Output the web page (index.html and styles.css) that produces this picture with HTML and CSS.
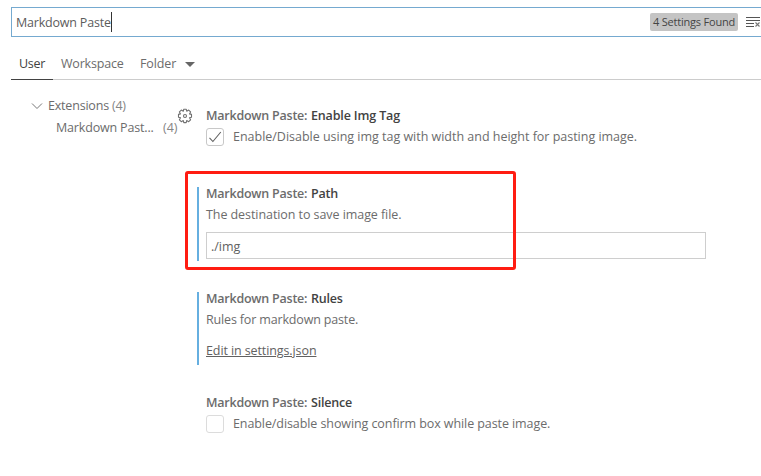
FILE: index.html
```
<!DOCTYPE html>
<html lang="en">
<head>
<meta charset="utf-8">
<title>Settings</title>
<link rel="stylesheet" href="styles.css">
</head>
<body>
<main class="settings">
  <header class="search">
    <div class="query"><span class="query-text">Markdown Paste</span><i class="caret"></i></div>
    <span class="count">4 Settings Found</span>
    <svg class="clear" width="15" height="12" viewBox="0 0 15 12"><path d="M0 1.5h14M0 4.5h14M0 7.5h8M0 10.5h8" stroke="#555" fill="none"/><path d="M9.5 6.5l4 4M13.5 6.5l-4 4" stroke="#777" stroke-width="1.1" fill="none"/></svg>
  </header>
  <nav class="tabs">
    <span class="tab active"><span class="t-user">User</span></span>
    <span class="tab workspace">Workspace</span>
    <span class="tab folder">Folder</span>
    <i class="arrow"></i>
  </nav>
  <div class="content">
    <aside class="tree">
      <div class="row parent">
        <svg width="12" height="8" viewBox="0 0 12 8"><path d="M1 1.5l5 5 5-5" fill="none" stroke="#777"/></svg>
        <span class="ext">Extensions <span class="num">(4)</span></span>
      </div>
      <div class="row child"><span class="child-name">Markdown Past...</span><span class="num">(4)</span></div>
    </aside>
    <section class="list">
      <article class="item first">
        <svg class="gear" width="16" height="16" viewBox="0 0 16 16" fill="none" stroke="#707070" stroke-width="1.1" stroke-linejoin="round"><path d="M6.8 1.2h2.4l.5 2 2-1.1 1.9 1.8-1.1 2 2 .5v2.9l-2 .5 1.1 2-1.9 1.9-2-1.1-.5 2H6.8l-.5-2-2 1.1-1.9-1.9 1.1-2-2-.5V6.4l2-.5-1.1-2 1.9-1.8 2 1.1z"/><circle cx="8" cy="8" r="1.5"/></svg>
        <h2><span class="cat">Markdown Paste:</span><span class="name n-tag">Enable Img Tag</span></h2>
        <div class="check-row"><span class="box"><svg width="16" height="16" viewBox="0 0 16 16"><path d="M2.5 8.8l3.4 3.7L13.8 3" fill="none" stroke="#616161" stroke-width="1.1"/></svg></span><p class="d-tag">Enable/Disable using img tag with width and height for pasting image.</p></div>
      </article>
      <article class="item modified path">
        <h2><span class="cat">Markdown Paste:</span><span class="name n-path">Path</span></h2>
        <p class="d-path">The destination to save image file.</p>
        <div class="field">./img</div>
        <div class="highlight"></div>
      </article>
      <article class="item modified rules">
        <h2><span class="cat">Markdown Paste:</span><span class="name n-rules">Rules</span></h2>
        <p class="d-rules">Rules for markdown paste.</p>
        <a class="edit">Edit in settings.json</a>
      </article>
      <article class="item silence">
        <h2><span class="cat">Markdown Paste:</span><span class="name n-silence">Silence</span></h2>
        <div class="check-row"><span class="box empty"></span><p class="d-silence">Enable/disable showing confirm box while paste image.</p></div>
      </article>
    </section>
  </div>
</main>
</body>
</html>
```
FILE: styles.css
```
* { box-sizing: border-box; }
body { margin: 0; background: #fff; color: #6c6c6c; font: 12.5px/20px "Open Sans", "Noto Sans", sans-serif; white-space: nowrap; }
h2, p { margin: 0; }
.settings { width: 761px; height: 476px; overflow: hidden; padding: 7px 0 0 11px; }
.search { display: flex; align-items: center; width: 754px; height: 30px; border: 1px solid #75aad0; padding-left: 4px; color: #5c5c5c; }
.query { display: flex; align-items: center; width: 634px; }
.query-text { letter-spacing: -.2px; padding-top: 1px; }
.caret { width: 1px; height: 20px; background: #333; }
.count { width: 88px; height: 18px; margin-top: -1px; border-radius: 2px; background: #c4c4c4; color: #444; font-size: 11px; letter-spacing: -.2px; line-height: 17px; text-align: center; }
.clear { margin: -1px 0 0 8px; flex: none; }
.tabs { display: flex; height: 43px; padding-top: 16px; border-bottom: 1px solid #ccc; }
.tab { height: 27px; line-height: 21px; }
.active { width: 42px; padding-left: 8px; border-bottom: 1px solid #424242; color: #424242; letter-spacing: -.25px; }
.workspace { width: 79px; padding-left: 8px; letter-spacing: -.2px; }
.folder { width: 53px; padding-left: 8px; letter-spacing: -.1px; }
.arrow { width: 10px; height: 5px; margin: 9px 0 0; border: 5px solid transparent; border-top-color: #666; border-bottom: 0; }
.content { display: flex; }
.tree { width: 186px; padding-top: 15px; }
.row { display: flex; align-items: center; height: 22px; }
.parent { padding-left: 20px; gap: 5px; }
.ext { letter-spacing: -.2px; }
.child { padding-left: 45px; }
.child-name { width: 107px; letter-spacing: -.17px; }
.num { color: #858585; }
.list { padding-top: 25px; }
.item { display: flow-root; position: relative; padding-left: 9px; }
.item h2 { display: flex; height: 21px; font-size: 12.5px; font-weight: 600; line-height: 21px; letter-spacing: -.2px; }
.item .cat { width: 105px; letter-spacing: -.23px; }
.name { color: #424242; }
.n-tag { letter-spacing: -.15px; }
.first { height: 82px; }
.gear { position: absolute; left: -20px; top: 3px; }
.check-row { display: flex; gap: 9px; line-height: 21px; }
.box { width: 18px; height: 18px; margin-top: 2px; border: 1px solid #c8c8c8; border-radius: 3px; }
.box svg { display: block; }
.empty { border-color: #dcdcdc; }
.d-tag { letter-spacing: -.015px; }
.modified { border-left: 2px solid #66afe0; padding-left: 7px; }
.modified h2 { margin-top: -4px; }
.modified p { padding-top: 1px; }
.path { height: 74px; }
.d-path { letter-spacing: -.07px; }
.field { width: 500px; height: 27px; margin-top: 7px; padding-left: 4px; border: 1px solid #cecece; line-height: 27px; color: #616161; }
.highlight { position: absolute; left: -14px; top: -16px; width: 331px; height: 99px; border: 3px solid #ff1c12; border-radius: 3px; }
.rules { height: 73px; margin-top: 31px; }
.d-rules { letter-spacing: -.16px; }
.edit { display: block; width: max-content; margin-top: 11px; color: #616161; text-decoration: underline; letter-spacing: -.1px; }
.silence { margin-top: 27px; }
.d-silence { letter-spacing: -.085px; }
```
